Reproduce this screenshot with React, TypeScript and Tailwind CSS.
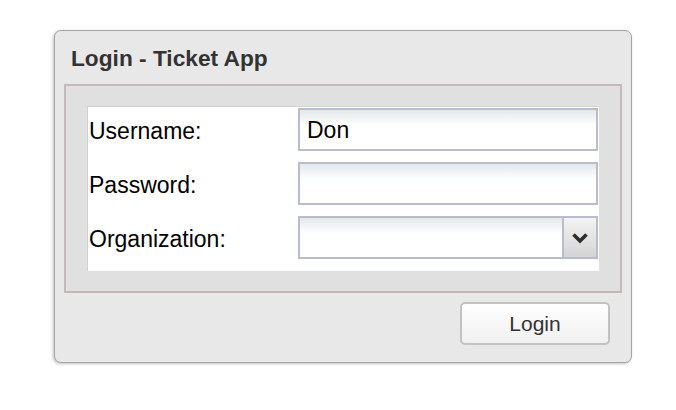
import { useState } from "react";

const font = { fontFamily: '"Liberation Sans", Arial, sans-serif' };

function Row({ label, children }: { label: string; children: React.ReactNode }) {
  return (
    <div className="flex items-center">
      <span className="w-[209px] text-[23px] leading-[26px] text-black pt-[3px]">{label}</span>
      {children}
    </div>
  );
}

function TextBox({ value, type = "text" }: { value?: string; type?: string }) {
  return (
    <input
      type={type}
      defaultValue={value}
      className="w-[300px] h-[43px] border-2 border-[#b9bccc] bg-linear-to-b from-[#e4e8e9] via-white via-40% to-white px-[7px] pt-[2px] text-[23px] text-black outline-none"
    />
  );
}

export default function App() {
  const [org] = useState("");

  return (
    <div className="w-[676px] h-[410px] bg-white pl-[54px] pt-[30px]" style={font}>
      <div className="w-[578px] h-[333px] rounded-[7px] border border-[#a6a6a6] bg-[#e8e8e8] shadow-[-1px_1px_3px_rgba(0,0,0,0.25)] pl-[9px] pt-[15px]">
        <h1 className="pl-[7px] text-[22.7px] leading-[25px] font-bold text-[#333333]">Login - Ticket App</h1>

        <div className="mt-[13px] w-[558px] h-[209px] border-2 border-[#c3b9b9] bg-[#e0e0e0] pl-[21px] pt-[20px]">
          <div className="w-[512px] h-[165px] border-t border-l border-[#d2d2d2] bg-white pl-[1px] pt-[1px] flex flex-col gap-[11px]">
            <Row label="Username:">
              <TextBox value="Don" />
            </Row>
            <Row label="Password:">
              <TextBox type="password" />
            </Row>
            <Row label="Organization:">
              <div className="w-[300px] h-[43px] border-2 border-[#b9bccc] flex">
                <div className="flex-1 bg-linear-to-b from-[#e4e8e9] via-white via-40% to-white text-[23px] px-[7px]">{org}</div>
                <div className="w-[34px] border-l-2 border-[#b9bccc] bg-linear-to-b from-[#f4f4f4] to-[#d4d4d4] flex items-center justify-center">
                  <svg width="18" height="12" viewBox="0 0 18 12">
                    <path d="M2.5 2.5 L9 9 L15.5 2.5" fill="none" stroke="#2e2e2e" strokeWidth="3.6" />
                  </svg>
                </div>
              </div>
            </Row>
          </div>
        </div>

        <div className="flex justify-end pr-[21px] pt-[9px]">
          <button className="w-[150px] h-[43px] rounded-[5px] border-2 border-[#c2c2c2] bg-linear-to-b from-white to-[#f0f0f0] text-[21px] text-[#333333]">
            Login
          </button>
        </div>
      </div>
    </div>
  );
}
